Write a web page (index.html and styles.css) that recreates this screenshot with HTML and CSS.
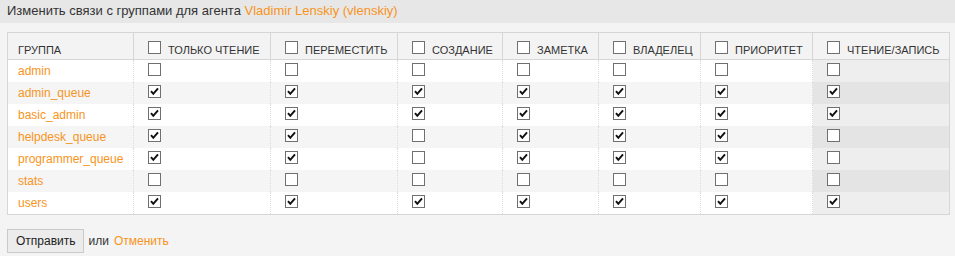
FILE: index.html
```html
<!DOCTYPE html>
<html lang="ru">
<head>
<meta charset="utf-8">
<title>Изменить связи с группами</title>
<link rel="stylesheet" href="styles.css">
</head>
<body>
<div class="titlebar">Изменить связи с группами для агента <a href="#">Vladimir Lenskiy (vlenskiy)</a></div>
<form class="content">
<table class="grid">
<colgroup>
<col class="c-name"><col class="c-ro"><col class="c-move"><col class="c-create"><col class="c-note"><col class="c-owner"><col class="c-prio"><col class="c-rw">
</colgroup>
<thead>
<tr>
<th>Группа</th>
<th><input type="checkbox" class="cb">Только чтение</th>
<th><input type="checkbox" class="cb">Переместить</th>
<th><input type="checkbox" class="cb">Создание</th>
<th><input type="checkbox" class="cb">Заметка</th>
<th><input type="checkbox" class="cb">Владелец</th>
<th><input type="checkbox" class="cb">Приоритет</th>
<th class="last"><input type="checkbox" class="cb">Чтение/запись</th>
</tr>
</thead>
<tbody>
<tr>
<td><a href="#">admin</a></td>
<td><input type="checkbox" class="cb"></td><td><input type="checkbox" class="cb"></td><td><input type="checkbox" class="cb"></td><td><input type="checkbox" class="cb"></td><td><input type="checkbox" class="cb"></td><td><input type="checkbox" class="cb"></td><td class="last"><input type="checkbox" class="cb"></td>
</tr>
<tr class="even">
<td><a href="#">admin_queue</a></td>
<td><input type="checkbox" class="cb" checked></td><td><input type="checkbox" class="cb" checked></td><td><input type="checkbox" class="cb" checked></td><td><input type="checkbox" class="cb" checked></td><td><input type="checkbox" class="cb" checked></td><td><input type="checkbox" class="cb" checked></td><td class="last"><input type="checkbox" class="cb" checked></td>
</tr>
<tr>
<td><a href="#">basic_admin</a></td>
<td><input type="checkbox" class="cb" checked></td><td><input type="checkbox" class="cb" checked></td><td><input type="checkbox" class="cb" checked></td><td><input type="checkbox" class="cb" checked></td><td><input type="checkbox" class="cb" checked></td><td><input type="checkbox" class="cb" checked></td><td class="last"><input type="checkbox" class="cb" checked></td>
</tr>
<tr class="even">
<td><a href="#">helpdesk_queue</a></td>
<td><input type="checkbox" class="cb" checked></td><td><input type="checkbox" class="cb" checked></td><td><input type="checkbox" class="cb"></td><td><input type="checkbox" class="cb" checked></td><td><input type="checkbox" class="cb" checked></td><td><input type="checkbox" class="cb" checked></td><td class="last"><input type="checkbox" class="cb"></td>
</tr>
<tr>
<td><a href="#">programmer_queue</a></td>
<td><input type="checkbox" class="cb" checked></td><td><input type="checkbox" class="cb" checked></td><td><input type="checkbox" class="cb"></td><td><input type="checkbox" class="cb" checked></td><td><input type="checkbox" class="cb" checked></td><td><input type="checkbox" class="cb" checked></td><td class="last"><input type="checkbox" class="cb"></td>
</tr>
<tr class="even">
<td><a href="#">stats</a></td>
<td><input type="checkbox" class="cb"></td><td><input type="checkbox" class="cb"></td><td><input type="checkbox" class="cb"></td><td><input type="checkbox" class="cb"></td><td><input type="checkbox" class="cb"></td><td><input type="checkbox" class="cb"></td><td class="last"><input type="checkbox" class="cb"></td>
</tr>
<tr>
<td><a href="#">users</a></td>
<td><input type="checkbox" class="cb" checked></td><td><input type="checkbox" class="cb" checked></td><td><input type="checkbox" class="cb" checked></td><td><input type="checkbox" class="cb" checked></td><td><input type="checkbox" class="cb" checked></td><td><input type="checkbox" class="cb" checked></td><td class="last"><input type="checkbox" class="cb" checked></td>
</tr>
</tbody>
</table>
<div class="actions">
<button type="button" class="btn">Отправить</button>
<span class="or">или</span>
<a href="#">Отменить</a>
</div>
</form>
</body>
</html>
```

FILE: styles.css
```css
html, body {
  margin: 0;
  padding: 0;
  background: #f4f4f4;
  font-family: "Liberation Sans", Arial, sans-serif;
  font-size: 12px;
  color: #333;
}
a {
  color: #f7941d;
  text-decoration: none;
}
.titlebar {
  height: 23px;
  line-height: 22px;
  background: #e7e7e7;
  padding: 0 7px;
  font-size: 13px;
  color: #333;
}
.content {
  margin: 0;
  padding: 9px 6px 0 7px;
}
.grid {
  border-collapse: collapse;
  table-layout: fixed;
  width: 943px;
  border: 1px solid #d6d6d6;
  background: #fff;
}
.c-name { width: 126px; }
.c-ro { width: 137px; }
.c-move { width: 127px; }
.c-create { width: 105px; }
.c-note { width: 96px; }
.c-owner { width: 102px; }
.c-prio { width: 112px; }
.c-rw { width: 137px; }
.grid th {
  height: 24px;
  padding: 0 10px 2px;
  background: #f3f3f3;
  border-left: 1px solid #d6d6d6;
  border-bottom: 1px solid #d6d6d6;
  font-size: 11px;
  font-weight: normal;
  line-height: 13px;
  text-transform: uppercase;
  text-align: left;
  vertical-align: bottom;
  white-space: nowrap;
  color: #333;
}
.grid th .cb {
  margin-right: 7px;
}
.grid td {
  height: 22px;
  padding: 0 10px;
  line-height: 22px;
  border-left: 1px dotted #dcdcdc;
  vertical-align: top;
  white-space: nowrap;
}
.grid tr.even td {
  background: #f5f5f5;
}
.grid td.last {
  background: #eeeeee;
}
.grid tr.even td.last {
  background: #e4e4e4;
}
.cb {
  -webkit-appearance: none;
  appearance: none;
  display: inline-block;
  width: 13px;
  height: 13px;
  margin: 0 3px 0 4px;
  box-sizing: border-box;
  border: 1px solid #707070;
  background: #fff;
  vertical-align: baseline;
}
.grid td .cb {
  vertical-align: top;
  margin-top: 3px;
}
.cb:checked {
  background: #fff url("data:image/svg+xml;utf8,<svg xmlns='http://www.w3.org/2000/svg' width='11' height='11' viewBox='0 0 11 11'><polyline points='2,5.2 4.3,7.8 9,2.4' fill='none' stroke='%23111' stroke-width='2'/></svg>") no-repeat center;
}
.actions {
  margin-top: 14px;
  display: flex;
  align-items: center;
  gap: 5px;
}
.btn {
  height: 24px;
  padding: 0 7px 0 8px;
  border: 1px solid #cacaca;
  background: #ececec;
  font-family: "Liberation Sans", Arial, sans-serif;
  font-size: 12px;
  color: #222;
  border-radius: 0;
}
.or {
  color: #333;
}
```
